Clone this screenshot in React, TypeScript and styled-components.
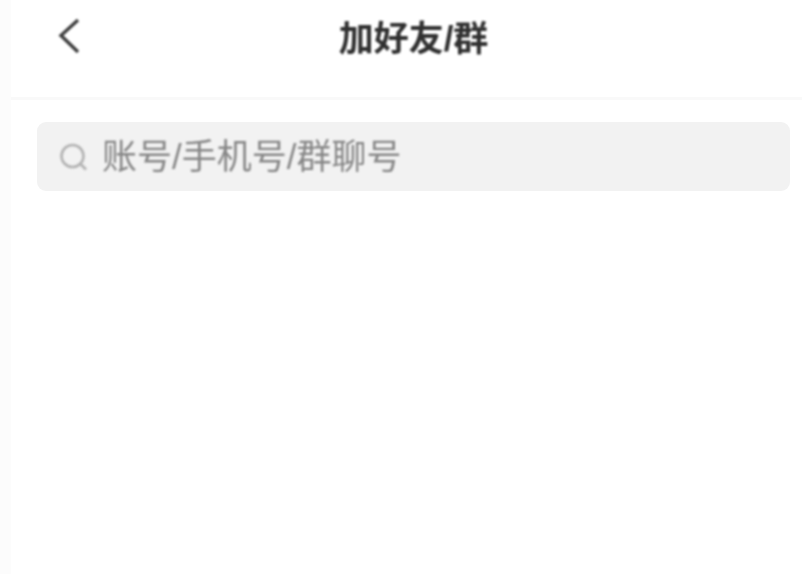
import React from 'react'
import styled, { createGlobalStyle } from 'styled-components'

const GlobalStyle = createGlobalStyle`
  html, body {
    margin: 0;
    padding: 0;
    background: #ffffff;
  }
  * {
    box-sizing: border-box;
  }
`

const Page = styled.div`
  width: 802px;
  height: 574px;
  overflow: hidden;
  background: #fcfcfc;
  padding-left: 11px;
  font-family: "Liberation Sans", "Noto Sans CJK SC", sans-serif;
`

const Screen = styled.div`
  height: 100%;
  background: #ffffff;
`

const Header = styled.header`
  height: 100px;
  padding-bottom: 20px;
  display: grid;
  grid-template-columns: 1fr auto 1fr;
  align-items: center;
  border-bottom: 3px solid #f9f9f9;
`

const BackButton = styled.button`
  justify-self: start;
  display: flex;
  margin: 0 0 5px 44px;
  padding: 0;
  border: 0;
  background: none;
  color: #3c3c3c;
  filter: blur(0.8px);
`

const Title = styled.h1`
  margin: 0 0 0 14px;
  font-size: 35px;
  line-height: 44px;
  font-weight: 700;
  color: #303030;
  filter: blur(1.3px);
`

const SearchBar = styled.div`
  margin: 22px 12px 0 26px;
  height: 69px;
  padding-left: 21px;
  display: flex;
  align-items: center;
  gap: 12px;
  border-radius: 9px;
  background: #f2f2f2;
`

const SearchIcon = styled.svg`
  flex: none;
  width: 32px;
  height: 32px;
  color: #b2b2b2;
  filter: blur(0.9px);
`

const Placeholder = styled.span`
  font-size: 35px;
  line-height: 44px;
  color: #868686;
  filter: blur(1.3px);
`

export default function App() {
  return (
    <>
      <GlobalStyle />
      <Page>
        <Screen>
          <Header>
            <BackButton aria-label="返回">
              <svg width="30" height="40" viewBox="0 0 30 40" fill="none">
                <path d="M23 4 L6 19.5 L23 36" stroke="currentColor" strokeWidth="3.4" />
              </svg>
            </BackButton>
            <Title>加好友/群</Title>
          </Header>
          <SearchBar>
            <SearchIcon viewBox="0 0 32 32" fill="none">
              <circle cx="14.5" cy="15" r="11" stroke="currentColor" strokeWidth="2.6" />
              <path d="M23 23.5 L28 28.5" stroke="currentColor" strokeWidth="2.6" />
            </SearchIcon>
            <Placeholder>账号/手机号/群聊号</Placeholder>
          </SearchBar>
        </Screen>
      </Page>
    </>
  )
}
